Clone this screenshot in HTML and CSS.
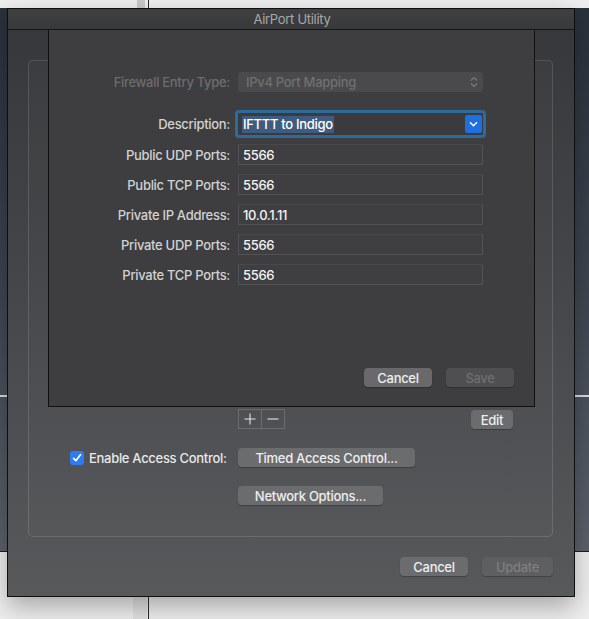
FILE: index.html
```html
<!DOCTYPE html>
<html lang="en">
<head>
  <meta charset="UTF-8" />
  <title>AirPort Utility</title>
  <link rel="stylesheet" href="styles.css">
</head>
<body>

  <!-- desktop behind the window -->
  <div class="desk-divider"></div>
  <div class="desk-thumb top"></div>
  <div class="desk-thumb bottom"></div>
  <div class="back-window">
    <div class="back-rule"></div>
  </div>

  <div class="window">
    <div class="titlebar">AirPort Utility</div>

    <div class="window-body">
      <div class="groupbox">
        <div class="table-area"></div>

        <div class="list-controls">
          <div class="segmented">
            <span class="seg">
              <svg width="12" height="12" viewBox="0 0 12 12"><path d="M6 0.5v11M0.5 6h11" stroke="#e4e4e4" stroke-width="1.1" fill="none"/></svg>
            </span>
            <span class="seg">
              <svg width="12" height="12" viewBox="0 0 12 12"><path d="M0.5 6h11" stroke="#e4e4e4" stroke-width="1.1" fill="none"/></svg>
            </span>
          </div>
          <button class="btn small">Edit</button>
        </div>

        <div class="option-row">
          <label class="check-label">
            <span class="checkbox">
              <svg width="10" height="10" viewBox="0 0 10 10"><path d="M1.6 5.3l2.3 2.4 4.5-6" stroke="#fff" stroke-width="1.7" fill="none" stroke-linecap="round" stroke-linejoin="round"/></svg>
            </span>
            Enable Access Control:
          </label>
          <button class="btn timed">Timed Access Control...</button>
        </div>

        <div class="option-row">
          <span></span>
          <button class="btn network">Network Options...</button>
        </div>
      </div>

      <div class="window-footer">
        <button class="btn wide">Cancel</button>
        <button class="btn wide update" disabled>Update</button>
      </div>
    </div>

    <!-- sheet over the window -->
    <div class="sheet">
      <div class="form">
        <span class="label disabled">Firewall Entry Type:</span>
        <div class="popup">
          IPv4 Port Mapping
          <svg class="updown" width="8" height="12" viewBox="0 0 8 12"><path d="M1 4.5l3-3 3 3M1 7.5l3 3 3-3" stroke="#7a7a7a" stroke-width="1.2" fill="none"/></svg>
        </div>

        <span class="label">Description:</span>
        <div class="combo">
          <span class="selected">IFTTT to Indigo</span>
          <span class="combo-arrow">
            <svg width="9" height="6" viewBox="0 0 9 6"><path d="M1 1.2l3.5 3.5 3.5-3.5" stroke="#fff" stroke-width="1.4" fill="none"/></svg>
          </span>
        </div>

        <span class="label">Public UDP Ports:</span>
        <div class="field">5566</div>

        <span class="label">Public TCP Ports:</span>
        <div class="field">5566</div>

        <span class="label">Private IP Address:</span>
        <div class="field">10.0.1.11</div>

        <span class="label">Private UDP Ports:</span>
        <div class="field">5566</div>

        <span class="label">Private TCP Ports:</span>
        <div class="field">5566</div>
      </div>

      <div class="sheet-buttons">
        <button class="btn sheet-btn">Cancel</button>
        <button class="btn sheet-btn save" disabled>Save</button>
      </div>
    </div>
  </div>

</body>
</html>
```

FILE: styles.css
```css
/* Base */
body {
  margin: 0;
  width: 589px;
  height: 619px;
  overflow: hidden;
  position: relative;
  background: #efefef;
  font-family: 'Inter', 'Liberation Sans', sans-serif;
  font-size: 13px;
  font-weight: 500;
  letter-spacing: -0.3px;
  color: #e6e6e6;
}

/* Desktop behind */
.desk-divider {
  position: absolute;
  left: 148px;
  top: 0;
  width: 1px;
  height: 619px;
  background: #2a2a2a;
}

.desk-thumb {
  position: absolute;
  background: #c9c9c9;
}

.desk-thumb.top {
  left: 137px;
  top: 0;
  width: 8px;
  height: 8px;
}

.desk-thumb.bottom {
  left: 133px;
  top: 597px;
  width: 14px;
  height: 22px;
  background: #e2e2e2;
}

.back-window {
  position: absolute;
  left: 0;
  top: 8px;
  width: 589px;
  height: 543px;
  background: linear-gradient(180deg, #29313b 0%, #3d4550 50%, #5c626b 100%);
  border-bottom: 1px solid #1d1f22;
}

.back-rule {
  position: absolute;
  left: 0;
  right: 0;
  top: 387px;
  height: 2px;
  background: #d9dbdd;
}

/* Main window */
.window {
  position: absolute;
  left: 7px;
  top: 8px;
  width: 568px;
  height: 589px;
  box-sizing: border-box;
  border: 1px solid #0f0f10;
  display: flex;
  flex-direction: column;
  box-shadow: 0 10px 24px rgba(0, 0, 0, 0.3);
}

.titlebar {
  height: 20px;
  line-height: 20px;
  text-align: center;
  color: #a8a8a8;
  font-weight: 400;
  background: linear-gradient(180deg, #3f4042 0%, #38393b 100%);
  border-bottom: 1px solid #161617;
  padding-left: 2px;
}

.window-body {
  flex: 1;
  display: flex;
  flex-direction: column;
  background: linear-gradient(180deg, #36383b 0%, #44464a 45%, #58595b 100%);
  padding: 30px 21px 0 20px;
}

/* Group box */
.groupbox {
  height: 477px;
  box-sizing: border-box;
  border: 1px solid rgba(255, 255, 255, 0.13);
  border-radius: 5px;
  background: rgba(255, 255, 255, 0.015);
  display: flex;
  flex-direction: column;
}

.table-area {
  height: 348px;
}

.list-controls {
  display: flex;
  justify-content: space-between;
  align-items: flex-start;
  padding: 0 39px 0 209px;
}

.segmented {
  display: flex;
  border: 1px solid #6b6c6f;
  height: 18px;
}

.seg {
  width: 22px;
  display: flex;
  align-items: center;
  justify-content: center;
}

.seg + .seg {
  border-left: 1px solid #6b6c6f;
}

.option-row {
  display: grid;
  grid-template-columns: 209px auto;
  align-items: center;
  margin-top: 19px;
}

.check-label {
  display: flex;
  align-items: center;
  gap: 5px;
  padding-left: 41px;
  color: #e8e8e8;
}

.checkbox {
  width: 14px;
  height: 14px;
  border-radius: 3px;
  background: #2c7cf5;
  display: flex;
  align-items: center;
  justify-content: center;
}

/* Buttons */
.btn {
  font-family: inherit;
  font-size: 13px;
  font-weight: 500;
  letter-spacing: -0.3px;
  color: #eeeeee;
  background: #6b6c6e;
  border: none;
  border-radius: 4px;
  height: 19px;
  padding: 0;
  box-shadow: 0 1px 1px rgba(0, 0, 0, 0.25);
  justify-self: start;
}

.btn.small {
  width: 42px;
  margin-top: 1px;
}

.btn.timed {
  width: 177px;
}

.btn.network {
  width: 145px;
}

.btn.wide {
  width: 68px;
}

.btn.update {
  width: 71px;
  background: #5e5f61;
  color: #7d7e80;
}

.window-footer {
  display: flex;
  justify-content: flex-end;
  gap: 14px;
  margin-top: 20px;
}

/* Sheet */
.sheet {
  position: absolute;
  left: 40px;
  top: 21px;
  width: 487px;
  height: 377px;
  box-sizing: border-box;
  border: 1px solid #111112;
  border-top: none;
  background: #3e3e40;
  display: flex;
  flex-direction: column;
}

.form {
  display: grid;
  grid-template-columns: 181px 245px;
  column-gap: 8px;
  row-gap: 9px;
  align-items: center;
  padding-top: 42px;
}

.label {
  text-align: right;
  color: #d2d2d2;
}

.label.disabled {
  color: #6c6c6e;
}

.popup {
  position: relative;
  height: 20px;
  line-height: 20px;
  border-radius: 4px;
  background: #4a4a4c;
  color: #707072;
  padding-left: 8px;
  margin-bottom: 12px;
}

.updown {
  position: absolute;
  right: 5px;
  top: 4px;
}

.form .label.disabled {
  margin-bottom: 12px;
}

.combo {
  height: 22px;
  display: flex;
  align-items: center;
  justify-content: space-between;
  background: #3b3b3d;
  outline: 3px solid #2c6b9c;
  border-radius: 1px;
  padding-left: 4px;
}

.selected {
  background: #3f5c80;
  color: #ffffff;
  line-height: 17px;
  padding: 0 1px;
}

.combo-arrow {
  width: 17px;
  height: 18px;
  margin-right: 1px;
  background: #1f6fe0;
  border-radius: 2px;
  display: flex;
  align-items: center;
  justify-content: center;
}

.field {
  height: 21px;
  line-height: 21px;
  box-sizing: border-box;
  border: 1px solid #525254;
  border-top-color: #48484a;
  background: #3f3f41;
  color: #f4f4f4;
  padding-left: 4px;
}

.sheet-buttons {
  margin-top: auto;
  display: flex;
  justify-content: flex-end;
  gap: 14px;
  padding: 0 20px 19px 0;
}

.btn.sheet-btn {
  width: 68px;
  background: #69696b;
}

.btn.save {
  background: #4f4f51;
  color: #6e6e70;
}
```
